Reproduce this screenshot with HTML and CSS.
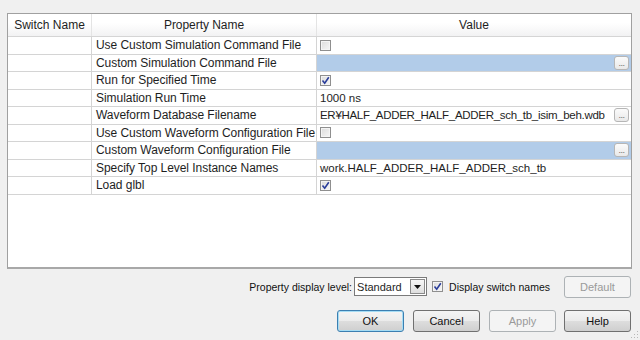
FILE: index.html
```html
<!DOCTYPE html>
<html lang="en">
<head>
  <meta charset="UTF-8" />
  <title>Process Properties - Simulate Behavioral Model</title>
  <link rel="stylesheet" href="styles.css">
</head>
<body>
  <div class="grid">
    <div class="row head">
      <div class="cell c1">Switch Name</div>
      <div class="cell c2">Property Name</div>
      <div class="cell c3">Value</div>
    </div>

    <div class="row">
      <div class="cell c1"></div>
      <div class="cell c2">Use Custom Simulation Command File</div>
      <div class="cell c3"><span class="chk"></span></div>
    </div>
    <div class="row">
      <div class="cell c1"></div>
      <div class="cell c2">Custom Simulation Command File</div>
      <div class="cell c3 sel"><span class="fill"></span><span class="dots">...</span></div>
    </div>
    <div class="row">
      <div class="cell c1"></div>
      <div class="cell c2">Run for Specified Time</div>
      <div class="cell c3"><span class="chk on"><svg viewBox="0 0 9 9"><path d="M1.5 4.5 L3.7 7.2 L7.8 1.2" /></svg></span></div>
    </div>
    <div class="row">
      <div class="cell c1"></div>
      <div class="cell c2">Simulation Run Time</div>
      <div class="cell c3">1000 ns</div>
    </div>
    <div class="row">
      <div class="cell c1"></div>
      <div class="cell c2">Waveform Database Filename</div>
      <div class="cell c3"><span class="fill path">ER¥HALF_ADDER_HALF_ADDER_sch_tb_isim_beh.wdb</span><span class="dots">...</span></div>
    </div>
    <div class="row">
      <div class="cell c1"></div>
      <div class="cell c2">Use Custom Waveform Configuration File</div>
      <div class="cell c3"><span class="chk"></span></div>
    </div>
    <div class="row">
      <div class="cell c1"></div>
      <div class="cell c2">Custom Waveform Configuration File</div>
      <div class="cell c3 sel"><span class="fill"></span><span class="dots">...</span></div>
    </div>
    <div class="row">
      <div class="cell c1"></div>
      <div class="cell c2">Specify Top Level Instance Names</div>
      <div class="cell c3">work.HALF_ADDER_HALF_ADDER_sch_tb</div>
    </div>
    <div class="row">
      <div class="cell c1"></div>
      <div class="cell c2">Load glbl</div>
      <div class="cell c3"><span class="chk on"><svg viewBox="0 0 9 9"><path d="M1.5 4.5 L3.7 7.2 L7.8 1.2" /></svg></span></div>
    </div>
  </div>

  <div class="options">
    <span class="lbl">Property display level:</span>
    <div class="combo">
      <span class="combo-text">Standard</span>
      <span class="combo-btn"><svg viewBox="0 0 7 4"><path d="M0 0 H7 L3.5 4 Z" /></svg></span>
    </div>
    <span class="chk on"><svg viewBox="0 0 9 9"><path d="M1.5 4.5 L3.7 7.2 L7.8 1.2" /></svg></span>
    <span class="lbl">Display switch names</span>
    <button class="btn disabled default-btn">Default</button>
  </div>

  <div class="actions">
    <button class="btn focus">OK</button>
    <button class="btn">Cancel</button>
    <button class="btn disabled">Apply</button>
    <button class="btn">Help</button>
  </div>
  <div class="grip"></div>
</body>
</html>
```

FILE: styles.css
```css
body {
  margin: 0;
  background: #f0f0f0;
  font-family: "Liberation Sans", "Noto Sans CJK JP", sans-serif;
  font-size: 12px;
  color: #1e1e1e;
  width: 640px;
  height: 340px;
  position: relative;
  overflow: hidden;
}

/* プロパティ一覧 */
.grid {
  margin: 13px 0 0 7px;
  width: 623px;
  height: 253px;
  background: #fff;
  border: 1px solid #a0a0a0;
  border-bottom: 2px solid #a8a8a8;
}
.row {
  display: flex;
  height: 17.5px;
  box-sizing: border-box;
  border-bottom: 1px solid #d4d4d4;
}
.row.head {
  height: 23px;
  background: linear-gradient(#ffffff 0%, #ffffff 40%, #f2f2f3 100%);
  border-bottom: 1px solid #d5d5d5;
}
.cell {
  box-sizing: border-box;
  display: flex;
  align-items: center;
  white-space: nowrap;
  overflow: hidden;
  border-right: 1px solid #d4d4d4;
}
.c1 { width: 84px; }
.c2 { width: 225px; padding-left: 4px; letter-spacing: -0.05px; }
.c3 { flex: 1; padding-left: 3px; border-right: none; font-size: 11.5px; }
.head .cell {
  justify-content: center;
  padding: 0;
  border-right: 1px solid #e4e4e4;
  font-size: 12px;
}
.head .c3 { border-right: none; }

.c3.sel { background: #b2cce9; }
.fill { flex: 1; min-width: 0; overflow: hidden; }
.fill.path { letter-spacing: -0.3px; }
.dots {
  flex: none;
  width: 15px;
  height: 14px;
  margin-right: 2px;
  box-sizing: border-box;
  border: 1px solid #b6b6b6;
  border-radius: 3px;
  background: linear-gradient(#fbfbfb, #e9e9e9);
  font-size: 9px;
  line-height: 13px;
  text-align: center;
  color: #6a6a6a;
  letter-spacing: -0.5px;
}

.chk {
  display: inline-block;
  flex: none;
  width: 11px;
  height: 11px;
  box-sizing: border-box;
  border: 1px solid #8f8f8f;
  background: linear-gradient(135deg, #dcdcdc, #f6f6f6);
  box-shadow: inset 0 0 0 1px #f4f4f4;
  position: relative;
}
.chk svg {
  position: absolute;
  left: 0;
  top: 0;
  width: 9px;
  height: 9px;
}
.chk path {
  fill: none;
  stroke: #2a3d9a;
  stroke-width: 1.6;
}

/* 下部の設定 */
.options {
  display: flex;
  align-items: center;
  justify-content: flex-end;
  margin: 7px 9px 0 0;
  height: 21px;
  font-size: 10.5px;
}
.options .lbl { color: #111; }
.combo {
  display: flex;
  align-items: center;
  width: 73px;
  height: 19px;
  box-sizing: border-box;
  margin: 0 5px 0 2px;
  border: 1px solid #7a7a7a;
  background: #fff;
  font-size: 11px;
}
.combo-text { flex: 1; padding-left: 2px; }
.combo-btn {
  width: 15px;
  height: 15px;
  margin-right: 1px;
  box-sizing: border-box;
  border: 1px solid #8a8a8a;
  background: linear-gradient(#f7f7f7, #dedede);
  display: flex;
  align-items: center;
  justify-content: center;
}
.combo-btn svg { width: 7px; height: 4px; }
.combo-btn path { fill: #111; }
.options .chk { margin-right: 6px; }
.default-btn { margin-left: 14px; }

.btn {
  width: 67px;
  height: 22px;
  box-sizing: border-box;
  border: 1px solid #707070;
  border-radius: 3px;
  background: linear-gradient(#f4f4f4 0%, #ebebeb 50%, #dddddd 51%, #cfcfcf 100%);
  font-family: "Liberation Sans", sans-serif;
  font-size: 11px;
  color: #111;
  padding: 0;
}
.btn.focus { border-color: #3c7fb1; box-shadow: inset 0 0 0 1px #a5dcf4; }
.btn.disabled {
  border-color: #adb2b5;
  background: #f4f4f4;
  color: #9a9a9a;
}

.actions {
  display: flex;
  justify-content: flex-end;
  gap: 9px;
  margin: 13px 9px 0 0;
}
.actions .btn:nth-child(3) { margin-right: -1px; }

.grip {
  position: absolute;
  right: 2px;
  bottom: 2px;
  width: 8px;
  height: 8px;
  background: radial-gradient(circle, #b8b8b8 0.8px, transparent 1px) 0 0 / 3px 3px;
  clip-path: polygon(100% 0, 100% 100%, 0 100%);
}
```
